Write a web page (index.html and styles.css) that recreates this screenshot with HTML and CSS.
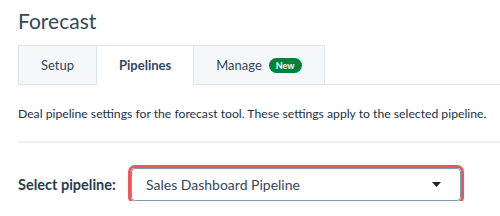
FILE: index.html
```html
<!DOCTYPE html>
<html lang="en">
<head>
    <meta charset="UTF-8">
    <title>Forecast</title>
    <link rel="stylesheet" href="styles.css">
</head>
<body>
    <div class="page">
        <h1 class="titulo">Forecast</h1>

        <div class="tabs">
            <div class="tab">Setup</div>
            <div class="tab activo">Pipelines</div>
            <div class="tab">Manage <span class="badge">New</span></div>
            <div class="tabs-resto"></div>
        </div>

        <p class="descripcion">Deal pipeline settings for the forecast tool. These settings apply to the selected pipeline.</p>

        <hr class="divisor">

        <div class="fila-select">
            <label class="etiqueta">Select pipeline:</label>
            <div class="select">
                <span>Sales Dashboard Pipeline</span>
                <svg width="9" height="5" viewBox="0 0 9 5"><path d="M0 0 L9 0 L4.5 5 Z" fill="#222"/></svg>
            </div>
        </div>
    </div>
</body>
</html>
```

FILE: styles.css
```css
body {
    margin: 0;
    font-family: Lato, "Liberation Sans", sans-serif;
    color: #2d3e50;
    background-color: #fff;
}

.page {
    padding: 0 0 0 18px;
}

.titulo {
    margin: 0;
    padding-top: 8px;
    font-size: 21px;
    font-weight: 400;
    line-height: 26px;
    color: #33475b;
}

.tabs {
    display: flex;
    margin-top: 11px;
    height: 40px;
}

.tab {
    display: flex;
    align-items: center;
    justify-content: center;
    padding: 0 22px;
    background-color: #f5f8fa;
    border: 1px solid #dfe3eb;
    font-size: 13px;
    color: #33475b;
    box-sizing: border-box;
}

.tab + .tab {
    border-left: none;
}

.tab.activo {
    background-color: #fff;
    border-bottom-color: #fff;
    font-weight: 700;
    padding: 0 22px;
}

.badge {
    margin-left: 7px;
    background-color: #00823a;
    color: #fff;
    font-size: 9px;
    font-weight: 700;
    border-radius: 9px;
    padding: 2px 7px;
}

.tabs-resto {
    flex: 1;
    border-bottom: 1px solid #dfe3eb;
}

.descripcion {
    margin: 21px 0 0 0;
    font-size: 12.2px;
    line-height: 16px;
    white-space: nowrap;
    color: #22313f;
}

.divisor {
    margin: 19px 0 0 0;
    border: none;
    border-top: 2px solid #eaf0f6;
}

.fila-select {
    display: flex;
    align-items: center;
    margin-top: 25px;
}

.etiqueta {
    width: 113px;
    font-size: 14.5px;
    font-weight: 700;
    color: #2a3b4c;
}

.select {
    display: flex;
    align-items: center;
    justify-content: space-between;
    width: 330px;
    height: 33px;
    box-sizing: border-box;
    padding: 0 19px 0 14px;
    border: 1px solid #7c98b6;
    border-radius: 4px;
    box-shadow: 0 0 0 3px #f2545b;
    font-size: 14px;
    color: #33475b;
}
```
